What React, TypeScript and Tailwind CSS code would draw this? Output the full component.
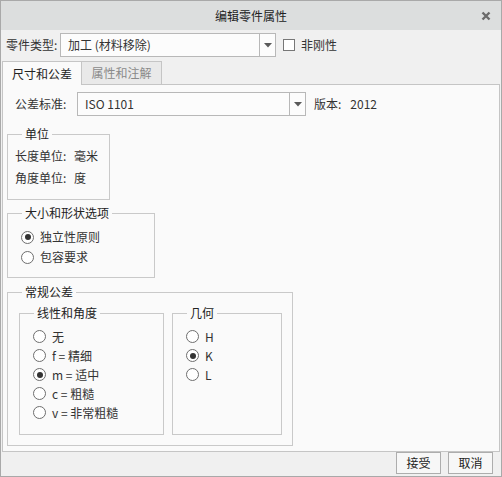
import type { JSX } from "react/jsx-runtime";
import type { ReactNode } from "react";

// Small down-pointing triangle used by the combo boxes
function Arrow(): JSX.Element {
    return (
        <svg width="8" height="5" viewBox="0 0 8 5">
            <path d="M0 0 L8 0 L4 4.5 Z" fill="#5a5a5a"/>
        </svg>
    );
}

function Combo({width, text}: {width: string; text: string}): JSX.Element {
    return (
        <div className={`flex h-[24px] border border-[#b8b8b8] bg-[#fcfcfc] ${width}`}>
            <div className="flex-1 flex items-center pl-[7px]">{text}</div>
            <div className="w-[16px] border-l border-[#b8b8b8] flex items-center justify-center">
                <Arrow/>
            </div>
        </div>
    );
}

function Radio({checked, label}: {checked?: boolean; label: string}): JSX.Element {
    return (
        <div className="flex items-center h-[19px]">
            <span className="w-[13px] h-[13px] rounded-full border border-[#6e6e6e] bg-white flex items-center justify-center shrink-0">
                {checked && <span className="w-[6px] h-[6px] rounded-full bg-[#333]"/>}
            </span>
            <span className="ml-[6px]">{label}</span>
        </div>
    );
}

function Group({legend, className, children}: {legend: string; className: string; children: ReactNode}): JSX.Element {
    return (
        <fieldset className={`border border-[#c9c9c9] ${className}`}>
            <legend className="ml-[14px] px-[3px] leading-[16px] text-[#222]">{legend}</legend>
            {children}
        </fieldset>
    );
}

function App(): JSX.Element {
    return (
        <div className="w-[502px] h-[477px] border border-[#a9a9a9] bg-[#f0f0f0] flex flex-col text-[12px] leading-[16px] text-[#333] font-['Noto_Sans_CJK_SC',sans-serif]">
            {/* Title bar */}
            <div className="h-[29px] bg-[#dcdede] relative flex items-center justify-center text-[12px] text-[#222]">
                编辑零件属性
                <button className="absolute right-[10px] top-[10px] w-[10px] h-[10px] flex items-center justify-center">
                    <svg width="10" height="10" viewBox="0 0 10 10">
                        <path d="M1.5 1.5 L8.5 8.5 M8.5 1.5 L1.5 8.5" stroke="#6b6b6b" strokeWidth="2.4"/>
                    </svg>
                </button>
            </div>

            {/* Part type row */}
            <div className="mt-[3px] flex items-center pl-[5px]">
                <span className="w-[54px]">零件类型:</span>
                <Combo width="w-[216px]" text="加工 (材料移除)"/>
                <span className="ml-[7px] w-[12px] h-[12px] border border-[#777] bg-white"/>
                <span className="ml-[6px]">非刚性</span>
            </div>

            {/* Tabs */}
            <div className="mt-[4px] flex pl-[1px] h-[23px]">
                <div className="relative z-10 w-[80px] h-[24px] border border-b-0 border-[#c5c5c5] bg-[#fafafa] flex items-center justify-center text-[#222]">
                    尺寸和公差
                </div>
                <div className="w-[80px] h-[23px] border border-l-0 border-b-0 border-[#c5c5c5] bg-[#e9e9e9] flex items-center justify-center text-[#8a8a8a]">
                    属性和注解
                </div>
            </div>

            {/* Tab panel */}
            <div className="mx-[1px] h-[368px] border border-[#c5c5c5] bg-[#fafafa] pt-[7px]">
                <div className="flex items-center pl-[12px]">
                    <span className="w-[62px]">公差标准:</span>
                    <Combo width="w-[229px]" text="ISO 1101"/>
                    <span className="ml-[8px]">版本:</span>
                    <span className="ml-[9px]">2012</span>
                </div>

                <Group legend="单位" className="ml-[4px] mt-[10px] w-[103px]">
                    <div className="pt-[3px] pb-[10px] pl-[7px] leading-[22px]">
                        <div className="flex"><span className="w-[59px]">长度单位:</span><span>毫米</span></div>
                        <div className="flex"><span className="w-[59px]">角度单位:</span><span>度</span></div>
                    </div>
                </Group>

                <Group legend="大小和形状选项" className="ml-[4px] mt-[5px] w-[148px]">
                    <div className="pt-[6px] pb-[10px] pl-[13px]">
                        <div className="h-[20px] flex items-center"><Radio checked label="独立性原则"/></div>
                        <div className="h-[20px] flex items-center"><Radio label="包容要求"/></div>
                    </div>
                </Group>

                <Group legend="常规公差" className="ml-[4px] mt-[6px] w-[286px]">
                    <div className="flex pt-[5px] pb-[10px] pl-[11px]">
                        <Group legend="线性和角度" className="w-[145px] h-[130px]">
                            <div className="pt-[6px] pl-[13px]">
                                <Radio label="无"/>
                                <Radio label="f = 精细"/>
                                <Radio checked label="m = 适中"/>
                                <Radio label="c = 粗糙"/>
                                <Radio label="v = 非常粗糙"/>
                            </div>
                        </Group>
                        <Group legend="几何" className="ml-[8px] w-[110px] h-[130px]">
                            <div className="pt-[6px] pl-[13px]">
                                <Radio label="H"/>
                                <Radio checked label="K"/>
                                <Radio label="L"/>
                            </div>
                        </Group>
                    </div>
                </Group>
            </div>

            {/* Bottom buttons */}
            <div className="flex justify-end gap-[7px] pr-[8px]">
                <button className="w-[45px] h-[22px] border border-[#adadad] bg-[#f7f7f7] text-[#222]">接受</button>
                <button className="w-[45px] h-[22px] border border-[#adadad] bg-[#f7f7f7] text-[#222]">取消</button>
            </div>
        </div>
    );
}

export default App;
